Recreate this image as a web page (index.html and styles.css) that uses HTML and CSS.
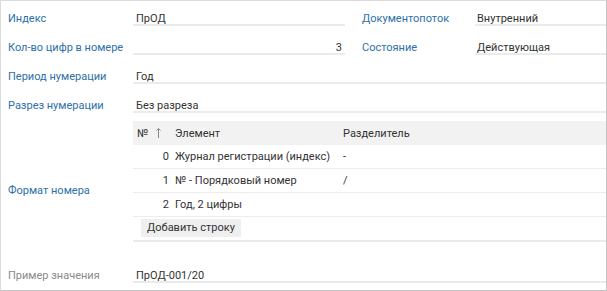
FILE: index.html
```html
<!DOCTYPE html>
<html lang="ru">
<head>
  <meta charset="UTF-8">
  <title>Нумератор</title>
  <link rel="stylesheet" href="styles.css">
</head>
<body>
  <div class="panel">
    <div class="row">
      <div class="label">Индекс</div>
      <div class="field field-short">ПрОД</div>
      <div class="label label-right">Документопоток</div>
      <div class="field field-right">Внутренний</div>
    </div>
    <div class="row">
      <div class="label">Кол-во цифр в номере</div>
      <div class="field field-short num">3</div>
      <div class="label label-right">Состояние</div>
      <div class="field field-right">Действующая</div>
    </div>
    <div class="row">
      <div class="label">Период нумерации</div>
      <div class="field field-wide">Год</div>
    </div>
    <div class="row">
      <div class="label">Разрез нумерации</div>
      <div class="field field-wide">Без разреза</div>
    </div>

    <div class="row row-table">
      <div class="label label-format">Формат номера</div>
      <div class="table-box">
        <table class="grid">
          <thead>
            <tr>
              <th class="col-n">№<svg class="sort" width="5" height="11" viewBox="0 0 5 11"><path d="M2.5 1.5V11M0.5 3.5L2.5 1.5L4.5 3.5" fill="none" stroke="#8a8a8a" stroke-width="1"/></svg></th>
              <th class="col-el">Элемент</th>
              <th>Разделитель</th>
            </tr>
          </thead>
          <tbody>
            <tr>
              <td class="col-n">0</td>
              <td class="col-el">Журнал регистрации (индекс)</td>
              <td>-</td>
            </tr>
            <tr>
              <td class="col-n">1</td>
              <td class="col-el">№ - Порядковый номер</td>
              <td>/</td>
            </tr>
            <tr>
              <td class="col-n">2</td>
              <td class="col-el">Год, 2 цифры</td>
              <td></td>
            </tr>
          </tbody>
        </table>
        <div class="table-foot">
          <button class="add-btn" type="button">Добавить строку</button>
        </div>
      </div>
    </div>

    <div class="row row-example">
      <div class="label label-muted">Пример значения</div>
      <div class="field field-wide">ПрОД-001/20</div>
    </div>
  </div>
</body>
</html>
```

FILE: styles.css
```css
body {
  margin: 0;
  font-family: Roboto, "Liberation Sans", sans-serif;
  font-size: 11px;
  color: #333;
  background: #fff;
}

.panel {
  width: 607px;
  height: 291px;
  box-sizing: border-box;
  border: 1px solid #dcdcdc;
  border-right-color: #c4c4c4;
  border-bottom-color: #c4c4c4;
  padding: 0 0 0 7px;
}

.row {
  display: flex;
  align-items: flex-start;
  height: 29px;
}

.label {
  width: 125px;
  flex: none;
  padding-top: 10px;
  line-height: 16px;
  color: #2d6fa8;
  white-space: nowrap;
}

.label-right {
  width: 113px;
  margin-left: 17px;
}

.label-muted {
  color: #8a8a8a;
}

.field {
  box-sizing: border-box;
  height: 25px;
  padding: 10px 3px 0;
  line-height: 16px;
  border-bottom: 2px solid #ebebeb;
  white-space: nowrap;
}

.field-short {
  width: 212px;
}

.field-right {
  flex: 1;
  padding-left: 2px;
}

.field-wide {
  flex: 1;
}

.num {
  text-align: right;
}

/* таблица формата */
.row-table {
  height: auto;
  align-items: stretch;
}

.label-format {
  padding-top: 66px;
}

.table-box {
  flex: 1;
  padding-top: 4px;
  border-bottom: 2px solid #ebebeb;
  padding-bottom: 3px;
}

.grid {
  width: 100%;
  table-layout: fixed;
  border-collapse: collapse;
}

.grid th,
.grid td {
  height: 24px;
  padding: 0 2px;
  text-align: left;
  font-weight: normal;
  white-space: nowrap;
}

.grid th {
  background: #f2f2f2;
}

.grid td {
  height: 23px;
  border-bottom: 1px solid #ececec;
}

.grid .col-n {
  width: 32px;
  padding: 0 4px;
}

.grid td.col-n {
  text-align: right;
}

.grid .col-el {
  width: 164px;
}

.sort {
  margin-left: 8px;
  vertical-align: -1px;
}

.table-foot {
  padding: 2px 0 0 8px;
}

.add-btn {
  border: none;
  background: #efefef;
  color: #333;
  font-family: inherit;
  font-size: 11px;
  line-height: 18px;
  height: 18px;
  padding: 0 6px;
}

.row-example {
  margin-top: 16px;
}
```
